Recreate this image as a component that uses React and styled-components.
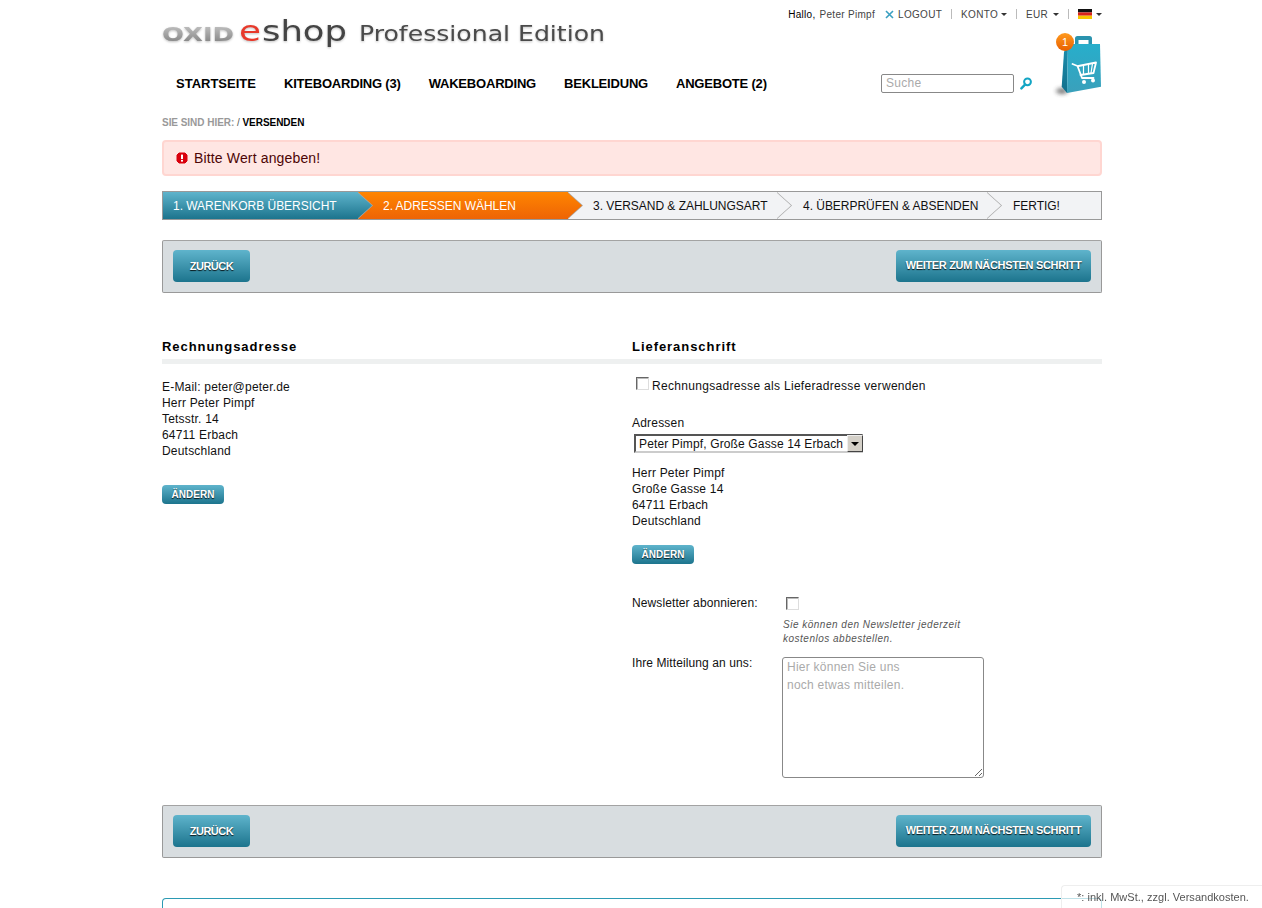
import React from "react";
import styled, { createGlobalStyle } from "styled-components";

const Global = createGlobalStyle`
  html, body { margin: 0; padding: 0; height: 908px; overflow: hidden; background: #fff; }
  body { font-family: "Liberation Sans", Arial, sans-serif; font-size: 12px; color: #111; }
  * { box-sizing: border-box; }
`;

const Page = styled.div`
  width: 940px;
  margin-left: 162px;
`;

const TopRow = styled.div`
  height: 62px;
  display: flex;
  justify-content: space-between;
  align-items: flex-start;
`;

const Logo = styled.svg`
  display: block;
  margin-top: 18px;
  filter: drop-shadow(0 1px 1px rgba(0, 0, 0, 0.25));
  font-family: "DejaVu Sans", "Liberation Sans", sans-serif;
`;

const TopLinks = styled.div`
  display: flex;
  align-items: center;
  height: 12px;
  margin-top: 8px;
  font-size: 10px;
  letter-spacing: 0.3px;
  color: #444;
  white-space: nowrap;
`;

const Hello = styled.span`
  color: #000;
  margin-right: 4px;
`;

const TopLink = styled.span`
  display: inline-flex;
  align-items: center;
  gap: ${(p) => p.$gap ?? 3}px;
  margin-left: ${(p) => p.$left ?? 0}px;
`;

const Sep = styled.span`
  width: 1px;
  height: 10px;
  background: #bbb;
  margin: 0 9px 0 9px;
`;

const Caret = styled.i`
  display: block;
  width: 0;
  height: 0;
  margin-left: 1px;
  border-style: solid;
  border-width: 3px 3px 0;
  border-color: #333 transparent transparent;
`;

const IconGlyph = styled.svg`
  display: block;
`;

const NavRow = styled.div`
  height: 42px;
  display: flex;
  align-items: center;
`;

const Nav = styled.nav`
  display: flex;
  gap: 28px;
  padding-left: 14px;
  flex: 1;
  font-size: 13px;
  font-weight: 700;
  letter-spacing: -0.2px;
  color: #000;
  white-space: nowrap;
  span:first-child { letter-spacing: 0; }
`;

const SearchInput = styled.input`
  width: 133px;
  height: 19px;
  padding: 0 4px;
  border: 1px solid #888;
  border-radius: 2px;
  font: 12px "Liberation Sans", Arial, sans-serif;
  letter-spacing: 0.3px;
  outline: none;
  &::placeholder { color: #aaa; opacity: 1; }
`;

const SearchIcon = styled.svg`
  display: block;
  margin: 0 20px 0 6px;
`;

const CartWrap = styled.div`
  position: relative;
  width: 50px;
  height: 65px;
  align-self: flex-start;
  margin-top: -29px;
`;

const CartBadge = styled.span`
  position: absolute;
  left: 4px;
  top: 0;
  width: 18px;
  height: 18px;
  border-radius: 50%;
  background: linear-gradient(#ff9a1e, #e85f00);
  color: #fff;
  font-size: 11px;
  line-height: 18px;
  text-align: center;
`;

const Breadcrumb = styled.div`
  margin-top: 13px;
  height: 12px;
  line-height: 12px;
  font-size: 10px;
  font-weight: 700;
  letter-spacing: -0.04px;
  color: #999;
  b { color: #000; }
  span { color: #555; font-weight: 400; }
`;

const Alert = styled.div`
  margin-top: 11px;
  height: 36px;
  padding-left: 12px;
  display: flex;
  align-items: center;
  gap: 6px;
  background: #ffe6e3;
  border: 2px solid #ffd6d1;
  border-radius: 4px;
  font-size: 14px;
  letter-spacing: 0.15px;
  color: #4d0505;
`;

const Steps = styled.ol`
  list-style: none;
  margin: 15px 0 0;
  padding: 0;
  height: 29px;
  display: flex;
  border: 1px solid #999;
  background: #f2f3f5;
`;

const fills = {
  done: "linear-gradient(#5fb4cc, #1c748d)",
  active: "linear-gradient(#ff8500, #ee6405)",
  todo: "#f2f3f5",
};

const Step = styled.li`
  position: relative;
  width: ${(p) => p.$width}px;
  padding-left: ${(p) => p.$inset}px;
  line-height: 28px;
  font-size: 12px;
  letter-spacing: -0.03px;
  white-space: nowrap;
  background: ${(p) => fills[p.$kind]};
  color: ${(p) => (p.$kind === "todo" ? "#111" : "#fff")};
  &::before, &::after {
    display: ${(p) => (p.$last ? "none" : "block")};
    content: "";
    position: absolute;
    top: 0;
    width: 15px;
    height: 27px;
    clip-path: polygon(0 0, 100% 50%, 0 100%);
    z-index: 1;
  }
  &::before { left: 100%; background: #a8a8a8; }
  &::after { left: calc(100% - 1px); background: ${(p) => fills[p.$kind]}; }
`;

const Bar = styled.div`
  height: 53px;
  padding: 9px 10px;
  display: flex;
  justify-content: space-between;
  background: #d8dde0;
  border: 1px solid #999;
  border-top-color: #a3a3a3;
  border-radius: 2px;
  margin-top: ${(p) => p.$top}px;
`;

const Button = styled.button`
  height: ${(p) => (p.$small ? 19 : 32)}px;
  width: ${(p) => p.$width}px;
  padding: 0 0 ${(p) => p.$lift ?? 0}px;
  border: 0;
  border-radius: 4px;
  background: linear-gradient(#5fb4cc, #1c748d);
  color: #fff;
  font: 700 ${(p) => (p.$small ? 10 : 11)}px "Liberation Sans", Arial, sans-serif;
  letter-spacing: ${(p) => p.$spacing ?? 0}px;
  text-shadow: 0 1px 1px rgba(0, 0, 0, 0.85);
  text-align: center;
  display: block;
`;

const Columns = styled.div`
  margin-top: 45px;
  display: grid;
  grid-template-columns: 470px 470px;
`;

const Column = styled.section``;

const Heading = styled.h3`
  margin: 0;
  height: 26px;
  padding-top: 1px;
  line-height: 16px;
  font-size: 13px;
  font-weight: 700;
  letter-spacing: 0.95px;
  color: #000;
  border-bottom: 5px solid #eef0f0;
`;

const Lines = styled.div`
  margin-top: ${(p) => p.$top}px;
  line-height: 16px;
  font-size: 12px;
  letter-spacing: 0.2px;
  color: #111;
`;

const ButtonSlot = styled.div`
  margin-top: ${(p) => p.$top}px;
`;

const Check = styled.input.attrs({ type: "checkbox" })`
  appearance: none;
  display: block;
  flex: none;
  margin: 0;
  width: 13px;
  height: 13px;
  background: #fff;
  border: 1px solid;
  border-color: #666 #ddd #ddd #666;
  box-shadow: inset 1px 1px 0 #bbb;
`;

const CheckRow = styled.label`
  display: flex;
  align-items: flex-start;
  margin-top: 13px;
  padding-left: 4px;
  height: 16px;
  gap: 3px;
  font-size: 12px;
  line-height: 18px;
  letter-spacing: 0.31px;
`;

const SelectWrap = styled.div`
  position: relative;
  margin: 3px 0 0 2px;
  width: 229px;
  height: 19px;
`;

const Select = styled.select`
  appearance: none;
  display: block;
  width: 100%;
  height: 100%;
  padding: 0 0 0 3px;
  background: #fff;
  border: 2px solid;
  border-color: #555 #ccc #ccc #555;
  border-radius: 0;
  font: 12px "Liberation Sans", Arial, sans-serif;
  letter-spacing: 0.14px;
  color: #111;
`;

const SelectArrow = styled.span`
  position: absolute;
  right: 0;
  top: 1px;
  width: 16px;
  height: 17px;
  background: #d4d0c8;
  border: 1px solid;
  border-color: #eee #444 #444 #eee;
  pointer-events: none;
  &::after {
    content: "";
    position: absolute;
    left: 3px;
    top: 6px;
    border-style: solid;
    border-width: 4px 4px 0;
    border-color: #000 transparent transparent;
  }
`;

const FormRow = styled.div`
  display: grid;
  grid-template-columns: 150px 1fr;
  margin-top: ${(p) => p.$top}px;
`;

const FormLabel = styled.label`
  line-height: ${(p) => p.$line}px;
  letter-spacing: 0.1px;
  padding-top: ${(p) => p.$pad}px;
`;

const NewsCheck = styled.div`
  padding: 0 0 0 4px;
  margin-top: 3px;
`;

const Hint = styled.p`
  margin: 8px 0 0 1px;
  font-size: 10px;
  line-height: 14px;
  font-style: italic;
  letter-spacing: 0.5px;
  color: #555;
`;

const Message = styled.textarea`
  display: block;
  width: 202px;
  height: 121px;
  padding: 0 4px;
  border: 1px solid #888;
  border-radius: 3px;
  font: 12px/18px "Liberation Sans", Arial, sans-serif;
  letter-spacing: 0.25px;
  outline: none;
  &::placeholder { color: #aaa; opacity: 1; }
`;

const FooterBox = styled.div`
  margin-top: 40px;
  height: 10px;
  border: 1px solid #2b9ab3;
  border-bottom: 0;
  border-radius: 4px 4px 0 0;
`;

const PriceNote = styled.div`
  position: fixed;
  right: 0;
  bottom: 0;
  width: 201px;
  height: 23px;
  padding-left: 15px;
  line-height: 22px;
  font-size: 11px;
  letter-spacing: 0.02px;
  color: #555;
  background: rgba(255, 255, 255, 0.7);
  border: 1px solid #eee;
  border-width: 1px 0 0 1px;
  border-top-left-radius: 4px;
`;

const LogoArt = () => (
  <Logo width="445" height="34" viewBox="0 0 445 34">
    <defs>
      <linearGradient id="oxidGrey" x1="0" y1="0" x2="0" y2="1">
        <stop offset="0" stopColor="#c9c9c9" />
        <stop offset="1" stopColor="#7d7d7d" />
      </linearGradient>
    </defs>
    <text x="0" y="23" fontSize="19" fontWeight="700" fill="url(#oxidGrey)" textLength="72" lengthAdjust="spacingAndGlyphs">OXID</text>
    <text x="77" y="23" fontSize="28" fill="#e8392b" textLength="22" lengthAdjust="spacingAndGlyphs">e</text>
    <text x="100" y="23" fontSize="28" fill="#444" textLength="85" lengthAdjust="spacingAndGlyphs">shop</text>
    <text x="197" y="23" fontSize="21" fill="#4a4a4a" textLength="246" lengthAdjust="spacingAndGlyphs">Professional Edition</text>
  </Logo>
);

const CloseIcon = () => (
  <IconGlyph width="9" height="9" viewBox="0 0 9 9">
    <path d="M1 1l7 7M8 1L1 8" stroke="#3a9fc0" strokeWidth="1.6" fill="none" />
  </IconGlyph>
);

const Flag = () => (
  <IconGlyph width="14" height="10" viewBox="0 0 14 10">
    <rect width="14" height="3.4" fill="#111" />
    <rect y="3.4" width="14" height="3.3" fill="#d8241c" />
    <rect y="6.7" width="14" height="3.3" fill="#f7c600" />
  </IconGlyph>
);

const AlertIcon = () => (
  <IconGlyph width="12" height="12" viewBox="0 0 12 12">
    <path d="M3 1H9L11 3V9L9 11H3L1 9V3Z" fill="#d9000d" stroke="#d9000d" strokeLinejoin="round" />
    <rect x="5" y="2.6" width="2" height="4.4" fill="#fff" />
    <rect x="5" y="7.9" width="2" height="1.7" fill="#fff" />
  </IconGlyph>
);

const CartArt = () => (
  <IconGlyph width="50" height="65" viewBox="0 0 50 65">
    <defs>
      <linearGradient id="bagFront" x1="0" y1="0" x2="0" y2="1">
        <stop offset="0" stopColor="#27aecb" />
        <stop offset="1" stopColor="#3aa0bb" />
      </linearGradient>
      <linearGradient id="bagSide" x1="0" y1="0" x2="0" y2="1">
        <stop offset="0" stopColor="#1c8fae" />
        <stop offset="1" stopColor="#11708c" />
      </linearGradient>
      <filter id="bagShadow" x="-100%" y="-200%" width="300%" height="500%"><feGaussianBlur stdDeviation="2" /></filter>
    </defs>
    <ellipse cx="10" cy="58" rx="6" ry="3" fill="#333" opacity="0.65" filter="url(#bagShadow)" />
    <path d="M23 11V5.5Q23 3 25.5 3H37.5Q40 3 40 5.5V11H36.5V7H26.5V11Z" fill="#2a93ae" />
    <path d="M12 19L16 11L15 60L9.7 53.7Z" fill="url(#bagSide)" />
    <path d="M16 11H48L49 53.7L15 60Z" fill="url(#bagFront)" />
    <g fill="none" stroke="#fff" strokeWidth="1.8" strokeLinejoin="round" strokeLinecap="round">
      <path d="M20.5 31L25.5 33L30 45H41.5" />
      <path d="M26.5 33L44 29.5L41.5 40L28.5 42" />
      <path d="M31.5 32V41M36.5 31V40.5M40.5 30.5L39 40" strokeWidth="1.2" />
    </g>
    <circle cx="32" cy="49" r="2" fill="#fff" />
    <circle cx="41" cy="47.5" r="2" fill="#fff" />
  </IconGlyph>
);

const Actions = ({ top }) => (
  <Bar $top={top}>
    <Button $width={77} $spacing={-0.5} type="button">ZURÜCK</Button>
    <Button $width={195} $spacing={-0.33} $lift={2} type="button">WEITER ZUM NÄCHSTEN SCHRITT</Button>
  </Bar>
);

export default function App() {
  return (
    <Page>
      <Global />
      <TopRow>
        <LogoArt />
        <TopLinks>
          <Hello>Hallo,</Hello>
          <span>Peter Pimpf</span>
          <TopLink $left={10} $gap={4}><CloseIcon />LOGOUT</TopLink>
          <Sep />
          <TopLink $gap={2}>KONTO <Caret /></TopLink>
          <Sep />
          <TopLink $gap={4}>EUR <Caret /></TopLink>
          <Sep />
          <TopLink><Flag /> <Caret /></TopLink>
        </TopLinks>
      </TopRow>
      <NavRow>
        <Nav>
          <span>STARTSEITE</span>
          <span>KITEBOARDING (3)</span>
          <span>WAKEBOARDING</span>
          <span>BEKLEIDUNG</span>
          <span>ANGEBOTE (2)</span>
        </Nav>
        <SearchInput placeholder="Suche" />
        <SearchIcon width="12" height="13" viewBox="0 0 12 13">
          <circle cx="7.5" cy="4.8" r="3.4" fill="none" stroke="#13a5c4" strokeWidth="2" />
          <path d="M5 7.6L1.4 11.4" stroke="#13a5c4" strokeWidth="2.4" strokeLinecap="round" />
        </SearchIcon>
        <CartWrap>
          <CartArt />
          <CartBadge>1</CartBadge>
        </CartWrap>
      </NavRow>
      <Breadcrumb>SIE SIND HIER: <span>/</span> <b>VERSENDEN</b></Breadcrumb>
      <Alert>
        <AlertIcon />
        Bitte Wert angeben!
      </Alert>
      <Steps>
        <Step $kind="done" $width={195} $inset={10}>1. WARENKORB ÜBERSICHT</Step>
        <Step $kind="active" $width={210} $inset={25}>2. ADRESSEN WÄHLEN</Step>
        <Step $kind="todo" $width={209} $inset={25}>3. VERSAND &amp; ZAHLUNGSART</Step>
        <Step $kind="todo" $width={210} $inset={26}>4. ÜBERPRÜFEN &amp; ABSENDEN</Step>
        <Step $kind="todo" $width={114} $inset={26} $last>FERTIG!</Step>
      </Steps>
      <Actions top={20} />
      <Columns>
        <Column>
          <Heading>Rechnungsadresse</Heading>
          <Lines $top={15}>
            E-Mail: peter@peter.de<br />
            Herr Peter Pimpf<br />
            Tetsstr. 14<br />
            64711 Erbach<br />
            Deutschland
          </Lines>
          <ButtonSlot $top={26}><Button $small $width={62} type="button">ÄNDERN</Button></ButtonSlot>
        </Column>
        <Column>
          <Heading>Lieferanschrift</Heading>
          <CheckRow><Check />Rechnungsadresse als Lieferadresse verwenden</CheckRow>
          <Lines $top={22}>Adressen</Lines>
          <SelectWrap>
            <Select defaultValue="a"><option value="a">Peter Pimpf, Große Gasse 14 Erbach</option></Select>
            <SelectArrow />
          </SelectWrap>
          <Lines $top={12}>
            Herr Peter Pimpf<br />
            Große Gasse 14<br />
            64711 Erbach<br />
            Deutschland
          </Lines>
          <ButtonSlot $top={16}><Button $small $width={62} type="button">ÄNDERN</Button></ButtonSlot>
          <FormRow $top={30}>
            <FormLabel $pad={1} $line={16}>Newsletter abonnieren:</FormLabel>
            <div>
              <NewsCheck><Check /></NewsCheck>
              <Hint>Sie können den Newsletter jederzeit<br />kostenlos abbestellen.</Hint>
            </div>
          </FormRow>
          <FormRow $top={11}>
            <FormLabel $pad={0} $line={13}>Ihre Mitteilung an uns:</FormLabel>
            <Message placeholder={"Hier können Sie uns\nnoch etwas mitteilen."} />
          </FormRow>
        </Column>
      </Columns>
      <Actions top={27} />
      <FooterBox />
      <PriceNote>*: inkl. MwSt., zzgl. Versandkosten.</PriceNote>
    </Page>
  );
}
